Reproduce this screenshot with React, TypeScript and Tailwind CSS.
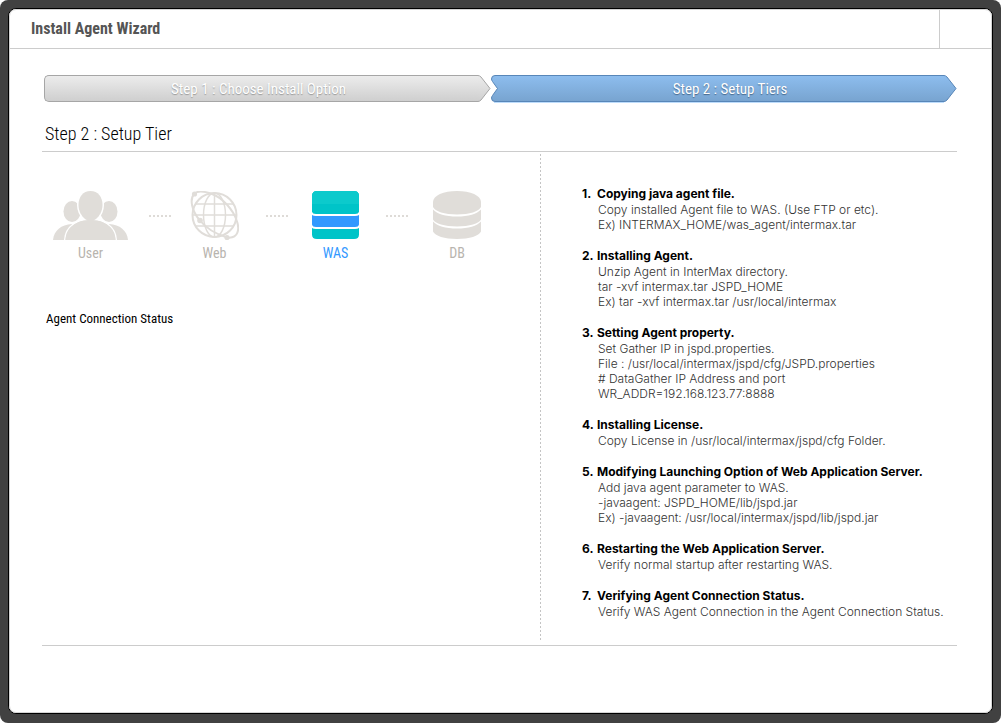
import type { ReactNode } from "react";

type Instruction = { title: string; lines: string[] };

const INSTRUCTIONS: Instruction[] = [
  {
    title: "Copying java agent file.",
    lines: [
      "Copy installed Agent file to WAS. (Use FTP or etc).",
      "Ex) INTERMAX_HOME/was_agent/intermax.tar",
    ],
  },
  {
    title: "Installing Agent.",
    lines: [
      "Unzip Agent in InterMax directory.",
      "tar -xvf intermax.tar JSPD_HOME",
      "Ex) tar -xvf intermax.tar /usr/local/intermax",
    ],
  },
  {
    title: "Setting Agent property.",
    lines: [
      "Set Gather IP in jspd.properties.",
      "File : /usr/local/intermax/jspd/cfg/JSPD.properties",
      "# DataGather IP Address and port",
      "WR_ADDR=192.168.123.77:8888",
    ],
  },
  {
    title: "Installing License.",
    lines: ["Copy License in /usr/local/intermax/jspd/cfg Folder."],
  },
  {
    title: "Modifying Launching Option of Web Application Server.",
    lines: [
      "Add java agent parameter to WAS.",
      "-javaagent: JSPD_HOME/lib/jspd.jar",
      "Ex) -javaagent: /usr/local/intermax/jspd/lib/jspd.jar",
    ],
  },
  {
    title: "Restarting the Web Application Server.",
    lines: ["Verify normal startup after restarting WAS."],
  },
  {
    title: "Verifying Agent Connection Status.",
    lines: ["Verify WAS Agent Connection in the Agent Connection Status."],
  },
];

function UserIcon() {
  return (
    <svg width="75" height="50" viewBox="0 0 75 50" fill="#e0ddd9" aria-hidden="true">
      <ellipse cx="19" cy="20.500" rx="8.500" ry="10.500" />
      <ellipse cx="56" cy="20.500" rx="8.500" ry="10.500" />
      <path d="M0 49C1 39.500 8 33.500 19 33L30 49Z" />
      <path d="M75 49C74 39.500 67 33.500 56 33L45 49Z" />
      <g stroke="#fff" strokeWidth="3" paintOrder="stroke">
        <path d="M12.500 49C13 36 24 29 37.500 29S62 36 62.500 49Z" />
        <path d="M37.500 0C45 0 49.500 6 49.500 14C49.500 20 46.500 25 43 28C40 30 35 30 32 28C28.500 25 25.500 20 25.500 14C25.500 6 30 0 37.500 0Z" />
      </g>
      <path d="M12.500 49C13 36 24 29 37.500 29S62 36 62.500 49Z" />
      <path d="M0 49h75v1H0z" fill="#fff" />
    </svg>
  );
}

function WebIcon() {
  return (
    <svg width="49" height="50" viewBox="0 0 49 50" fill="none" stroke="#e0ddd9" aria-hidden="true">
      <circle cx="24.500" cy="24" r="22" strokeWidth="2" />
      <ellipse cx="24.500" cy="24" rx="11" ry="22" strokeWidth="1.500" />
      <path d="M24.500 2v44M5.500 13h38M2.500 24h44M5.500 35h38" strokeWidth="1.500" />
      <path
        d="M4.500 2.500C8 -.5 15 .5 22 3C33 7 43 19 46.500 29C50 38 48.500 48 37 46.500C26 43 15 36 9.500 29C2 20 -1 8 4.500 2.500Z"
        strokeWidth="2"
      />
      <g fill="#e0ddd9" stroke="none">
        <circle cx="4.500" cy="3" r="2.600" />
        <circle cx="10" cy="29.500" r="2.800" />
        <circle cx="37" cy="46.500" r="2.600" />
      </g>
    </svg>
  );
}

function WasIcon() {
  return (
    <svg width="47" height="50" viewBox="0 0 47 50" aria-hidden="true">
      <path d="M5 0h37q5 0 5 5v15.500q-.5 2.500-4 2.500H4q-3.500 0-4-2.500V5q0-5 5-5z" fill="#00c4c8" />
      <path d="M5 0h37q5 0 5 5v8H0V5q0-5 5-5z" fill="#0ccacc" />
      <path d="M0 24q1.500 1 4 1h39q2.500 0 4-1v9.500q-.5 2.500-4 2.500H4q-3.500 0-4-2.500z" fill="#3399ff" />
      <path d="M0 37q1.500 1 4 1h39q2.500 0 4-1v6.500q0 4.500-5 4.500H5q-5 0-5-4.500z" fill="#00c4c8" />
    </svg>
  );
}

function DbIcon() {
  return (
    <svg width="48" height="50" viewBox="0 0 48 50" fill="#e0ddd9" aria-hidden="true">
      <path d="M0 11C0 4.500 10.500 0 24 0s24 4.500 24 11v5c-2 4.500-11.500 7.500-24 7.500S2 20.500 0 16z" />
      <path d="M0 18.500c4 4.500 12.500 7 24 7S44 23 48 18.500v10c-2 4-11.500 7-24 7s-22-3-24-7z" />
      <path d="M0 30.500c4 4.500 12.500 7 24 7S44 35 48 30.500v10c-2 4.500-11.500 7.500-24 7.500S2 45 0 40.500z" />
    </svg>
  );
}

function Tier({ label, active, children }: { label: string; active?: boolean; children: ReactNode }) {
  return (
    <button
      type="button"
      className={
        active
          ? "flex flex-col items-center gap-1 text-[#3399ff]"
          : "flex flex-col items-center gap-1 text-[#b8b4ae]"
      }
    >
      {children}
      <span className="text-sm leading-4">{label}</span>
    </button>
  );
}

function Dots() {
  return (
    <div className="flex justify-center gap-0.5 pt-6 pl-0.5" aria-hidden="true">
      {[0, 1, 2, 3, 4, 5].map((i) => (
        <span key={i} className="size-0.5 bg-[#dedbd7]" />
      ))}
    </div>
  );
}

function StepBar() {
  return (
    <ol className="ml-0.5 flex items-start text-[15px] leading-[27px] text-white">
      <li className="flex flex-[447]">
        <div className="h-[27px] flex-1 rounded-l-[5px] border border-r-0 border-[#a6a6a6] bg-linear-to-b from-[#ececec] to-[#cfcfcf] pr-1.5 text-center text-shadow-[0_1px_1px_#999999]">
          Step 1 : Choose Install Option
        </div>
        <svg width="13" height="27" viewBox="0 0 13 27" aria-hidden="true">
          <defs>
            <linearGradient id="grayCap" x1="0" y1="0" x2="0" y2="1">
              <stop offset="0" stopColor="#ececec" />
              <stop offset="1" stopColor="#cfcfcf" />
            </linearGradient>
          </defs>
          <path d="M0 .5q1.500 0 3 1.500l9 11.500L3 25q-1.500 1.500-3 1.500" fill="url(#grayCap)" stroke="#a6a6a6" />
        </svg>
      </li>
      <li className="flex flex-[466]">
        <svg width="9" height="28" viewBox="0 0 9 28" aria-hidden="true">
          <defs>
            <linearGradient id="blueCap" x1="0" y1="0" x2="0" y2="1">
              <stop offset="0" stopColor="#8dbdee" />
              <stop offset="1" stopColor="#78a4d0" />
            </linearGradient>
          </defs>
          <path d="M3 27.500h6" stroke="#bddcfb" />
          <path d="M9 .5H4Q.5 .5 .5 4q0 1 1 2.500l5 7-5 7q-1 1.500-1 2.500 0 3.500 3.500 3.500H9" fill="url(#blueCap)" stroke="#5886b8" />
        </svg>
        <div className="h-[27px] flex-1 border-y border-[#5886b8] bg-linear-to-b from-[#8dbdee] to-[#78a4d0] pl-4 text-center shadow-[0_1px_0_#bddcfb] text-shadow-[0_1px_1px_#46688c]">
          Step 2 : Setup Tiers
        </div>
        <svg width="13" height="27" viewBox="0 0 13 27" aria-hidden="true">
          <path d="M0 .5q1.500 0 3 1.500l9 11.500L3 25q-1.500 1.500-3 1.500" fill="url(#blueCap)" stroke="#5886b8" />
        </svg>
      </li>
    </ol>
  );
}

export default function App() {
  return (
    <div className="bg-white font-['Roboto_Condensed','Liberation_Sans',sans-serif]">
      <div className="flex min-h-screen flex-col rounded-lg bg-[#414141] p-2 pb-[9px]">
        <div className="flex flex-1 flex-col rounded-lg border border-black bg-white">
          <div className="flex flex-1 flex-col rounded-[7px] border border-[#d4d4d4]">
            <header className="flex h-[39px] border-b border-[#cccccc]">
              <h1 className="flex-1 pl-[21px] text-base leading-[38px] font-bold text-[#555555]">
                Install Agent Wizard
              </h1>
              <div className="w-[52px] border-l border-[#cccccc]" />
            </header>

            <main className="flex flex-1 flex-col pt-[26px] pr-[34px] pl-8">
              <StepBar />

              <h2 className="mt-[18px] border-b border-[#cccccc] pb-1 pl-[3px] text-lg leading-[26px] font-light text-black">
                Step 2 : Setup Tier
              </h2>

              <div className="grid grid-cols-[498fr_1px_416fr] border-b border-[#cccccc]">
                <section className="min-w-0 pt-[39px]">
                  <div className="grid grid-cols-[75px_62px_49px_73px_47px_74px_48px] pl-[11px]">
                    <Tier label="User">
                      <UserIcon />
                    </Tier>
                    <Dots />
                    <Tier label="Web">
                      <WebIcon />
                    </Tier>
                    <Dots />
                    <Tier label="WAS" active>
                      <WasIcon />
                    </Tier>
                    <Dots />
                    <Tier label="DB">
                      <DbIcon />
                    </Tier>
                  </div>
                  <h3 className="mt-12 pl-1 text-[13px] leading-5 text-black">Agent Connection Status</h3>
                </section>

                <div className="pt-0.5 pb-[3px]" aria-hidden="true">
                  <div className="h-full bg-[repeating-linear-gradient(to_bottom,#c4c4c4_0_2px,transparent_2px_4px)]" />
                </div>

                <section className="min-w-0 pt-[34px] pb-[26px] pl-[41px]">
                  <ol className="flex flex-col gap-4 font-['Inter','Liberation_Sans',sans-serif] text-xs leading-[15px]">
                    {INSTRUCTIONS.map((item, index) => (
                      <li key={item.title} className="flex">
                        <span className="w-[15px] leading-4 font-bold text-black">{index + 1}.</span>
                        <div className="flex-1">
                          <h4 className="leading-4 font-bold text-black">{item.title}</h4>
                          {item.lines.map((line) => (
                            <p key={line} className="pl-px font-light whitespace-nowrap text-[#333333]">
                              {line}
                            </p>
                          ))}
                        </div>
                      </li>
                    ))}
                  </ol>
                </section>
              </div>
            </main>
          </div>
        </div>
      </div>
    </div>
  );
}
